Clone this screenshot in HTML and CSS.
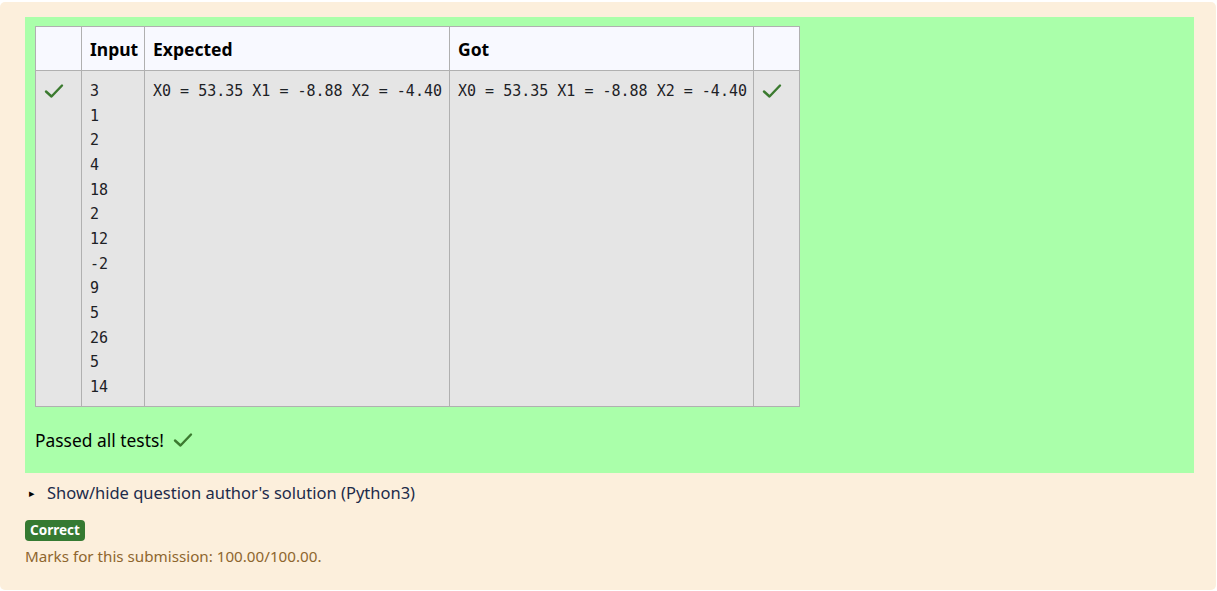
FILE: index.html
```html
<!DOCTYPE html>
<html>
<head>
<meta charset="utf-8">
<link rel="stylesheet" href="styles.css">
</head>
<body>
<div class="outcome">
  <div class="results">
    <table class="coderunner-test-results">
      <colgroup>
        <col class="c-icon"><col class="c-input"><col class="c-exp"><col class="c-got"><col class="c-icon2">
      </colgroup>
      <thead>
        <tr><th></th><th>Input</th><th>Expected</th><th>Got</th><th></th></tr>
      </thead>
      <tbody>
        <tr>
          <td class="icon"><svg class="tick" viewBox="0 0 20 16" width="20" height="16"><path d="M2 8.5 L7.5 13.5 L18 2.5" fill="none" stroke="#3b7a2f" stroke-width="2.4" stroke-linecap="round" stroke-linejoin="round"/></svg></td>
          <td><pre>3
1
2
4
18
2
12
-2
9
5
26
5
14</pre></td>
          <td><pre>X0 = 53.35 X1 = -8.88 X2 = -4.40</pre></td>
          <td><pre>X0 = 53.35 X1 = -8.88 X2 = -4.40</pre></td>
          <td class="icon"><svg class="tick" viewBox="0 0 20 16" width="20" height="16"><path d="M2 8.5 L7.5 13.5 L18 2.5" fill="none" stroke="#3b7a2f" stroke-width="2.4" stroke-linecap="round" stroke-linejoin="round"/></svg></td>
        </tr>
      </tbody>
    </table>
    <p class="passed">Passed all tests! <svg class="tick" viewBox="0 0 20 16" width="20" height="16"><path d="M2 8.5 L7.5 13.5 L18 2.5" fill="none" stroke="#3b7a2f" stroke-width="2.4" stroke-linecap="round" stroke-linejoin="round"/></svg></p>
  </div>
  <div class="solution"><span class="tri">&#9656;</span>Show/hide question author's solution (Python3)</div>
  <div class="badge-row"><span class="badge">Correct</span></div>
  <div class="marks">Marks for this submission: 100.00/100.00.</div>
</div>
</body>
</html>
```
FILE: styles.css
```css
html, body {
  margin: 0;
  padding: 0;
  background: #ffffff;
}
body {
  font-family: "Noto Sans", "Open Sans", sans-serif;
  color: #1d2125;
}
.outcome {
  margin: 2px 1px 0 0;
  height: 588px;
  box-sizing: border-box;
  background: #fcefdc;
  border-radius: 5px;
  padding: 15px 22px 0 25px;
}
.results {
  background: #aaffaa;
  padding: 9px 10px 1px 10px;
  height: 456px;
  box-sizing: border-box;
}
.coderunner-test-results {
  border-collapse: collapse;
  table-layout: fixed;
  width: 764px;
}
.c-icon { width: 46px; }
.c-input { width: 63px; }
.c-exp { width: 305px; }
.c-got { width: 304px; }
.c-icon2 { width: 46px; }
.coderunner-test-results th,
.coderunner-test-results td {
  border: 1px solid #b0b0b0;
  text-align: left;
  vertical-align: top;
}
.coderunner-test-results th {
  background: #f8f9ff;
  height: 42px;
  padding: 1px 8px 0 8px;
  font-weight: 700;
  font-size: 17.5px;
  vertical-align: middle;
  color: #000;
}
.coderunner-test-results td {
  background: #e5e5e5;
  padding: 8px 8px 6px 8px;
}
.coderunner-test-results td.icon {
  padding: 7px 0 0 8px;
}
pre {
  margin: 0;
  font-family: "DejaVu Sans Mono", monospace;
  font-size: 15px;
  line-height: 24.67px;
  color: #1d2125;
  white-space: pre;
}
.tick {
  display: inline-block;
  vertical-align: middle;
}
.passed {
  margin: 13px 0 0 0;
  font-size: 17.4px;
  color: #000;
  display: flex;
  align-items: center;
  gap: 9px;
  height: 40px;
}
.solution {
  margin-top: 8px;
  font-size: 16.5px;
  color: #1d2b4a;
  display: flex;
  align-items: center;
  height: 22px;
}
.tri {
  font-size: 11px;
  width: 22px;
  padding-left: 4px;
  box-sizing: border-box;
  color: #000;
}
.badge-row {
  margin-top: 17px;
  display: flex;
}
.badge {
  background: #357a32;
  color: #fff;
  font-weight: 700;
  font-size: 13.5px;
  border-radius: 4px;
  padding: 0 4px;
  height: 21px;
  line-height: 21px;
  width: 60px;
  box-sizing: border-box;
  text-align: center;
}
.marks {
  margin-top: 5px;
  font-size: 15.2px;
  color: #8e662e;
}
```
